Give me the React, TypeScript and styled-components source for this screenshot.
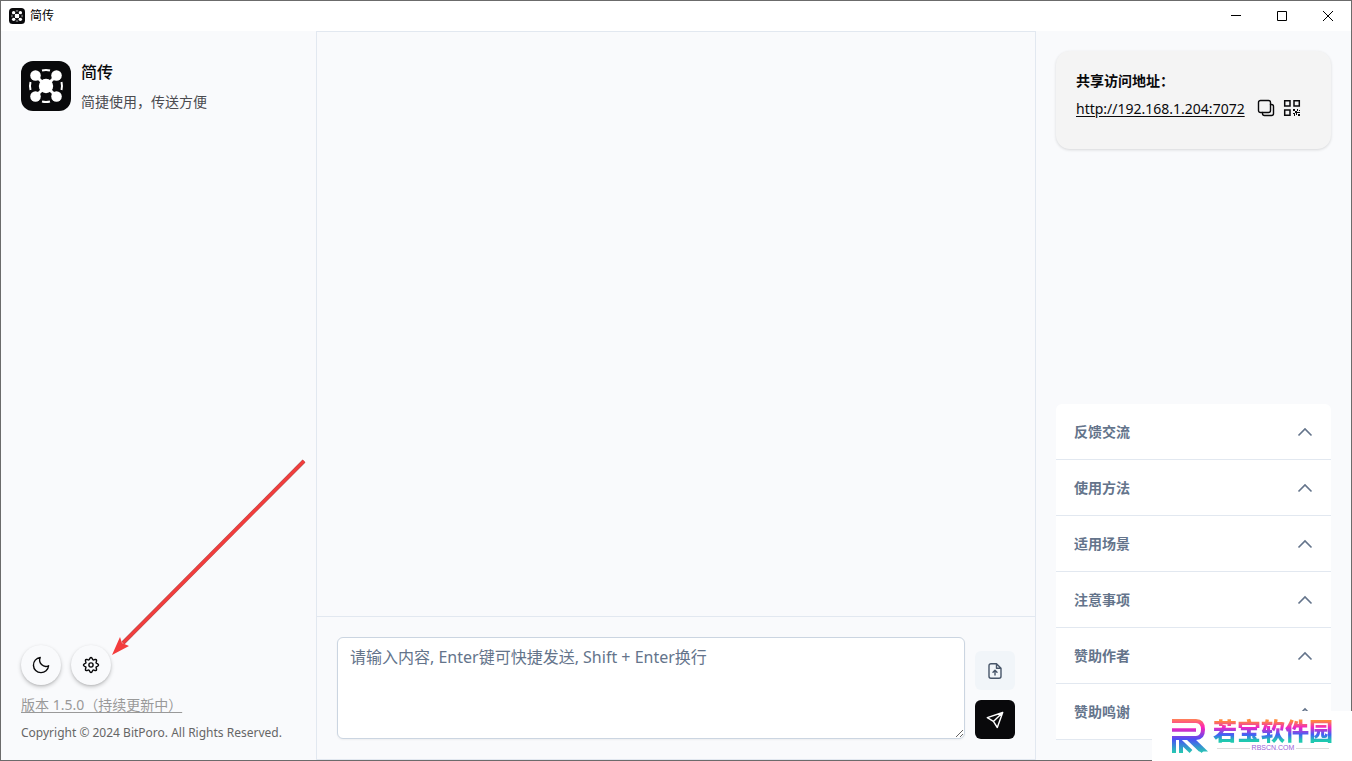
import React from 'react';
import styled, { createGlobalStyle, css } from 'styled-components';

const GlobalStyle = createGlobalStyle`
  *, *::before, *::after { box-sizing: border-box; }
  body {
    margin: 0;
    background: #f9fafc;
    color: #09090b;
    font-family: "Noto Sans", "Noto Sans CJK SC", sans-serif;
    font-size: 14px;
    line-height: 20px;
  }
  h1, h2, p { margin: 0; }
  button, textarea { font: inherit; color: inherit; }
  button { padding: 0; border: 0; background: none; cursor: pointer; }
  svg { display: block; flex: none; }
`;

const Window = styled.div`
  position: relative;
  display: flex;
  flex-direction: column;
  min-height: 100vh;
  border: 1px solid #6b6b6b;
`;

const TitleBar = styled.header`
  display: flex;
  align-items: center;
  gap: 5px;
  height: 30px;
  padding-left: 8px;
  background: #fff;
  color: #000;
  font-size: 12px;
`;

const WindowControls = styled.div`
  display: flex;
  align-self: stretch;
  margin-left: auto;
`;

const WindowButton = styled.button`
  display: grid;
  place-items: center;
  width: 46px;
`;

const Columns = styled.div`
  flex: 1;
  display: grid;
  grid-template-columns: minmax(0, 7fr) minmax(0, 16fr) minmax(0, 7fr);
`;

const Sidebar = styled.aside`
  display: flex;
  flex-direction: column;
  justify-content: space-between;
  padding: 30px 20px 15px;
`;

const Brand = styled.div`
  display: flex;
  gap: 10px;
`;

const BrandText = styled.div`
  display: flex;
  flex-direction: column;
  gap: 9px;
`;

const AppName = styled.h1`
  font-size: 16px;
  line-height: 22px;
  font-weight: 500;
`;

const Tagline = styled.p`
  color: #4b4b50;
`;

const RoundButtons = styled.div`
  display: flex;
  gap: 10px;
  margin-bottom: 8px;
`;

const RoundButton = styled.button`
  display: grid;
  place-items: center;
  width: 40px;
  height: 40px;
  border-radius: 50%;
  background: #f9fafc;
  box-shadow: 0 2px 4px rgba(0, 0, 0, 0.2), 0 1px 2px rgba(0, 0, 0, 0.1);
`;

const VersionLink = styled.a`
  display: table;
  color: #999;
  line-height: 24px;
  text-decoration: underline;
  text-underline-offset: 2px;
`;

const Copyright = styled.p`
  margin-top: 4px;
  color: #666;
  font-size: 12px;
  line-height: 24px;
`;

const Chat = styled.main`
  display: flex;
  flex-direction: column;
  border: 1px solid #e2e8f0;
`;

const Messages = styled.section`
  flex: 1;
`;

const Composer = styled.form`
  display: flex;
  align-items: flex-end;
  gap: 10px;
  padding: 20px;
  border-top: 1px solid #e2e8f0;
`;

const MessageInput = styled.textarea`
  flex: 1;
  height: 102px;
  padding: 7px 12px;
  border: 1px solid #cbd5e1;
  border-radius: 6px;
  background: #fff;
  box-shadow: 0 1px 2px rgba(0, 0, 0, 0.05);
  font-size: 16px;
  line-height: 24px;
  outline: none;
  &::placeholder { color: #64748b; opacity: 1; }
`;

const ComposerActions = styled.div`
  display: flex;
  flex-direction: column;
  gap: 10px;
`;

const SquareButton = styled.button<{ $primary?: boolean }>`
  display: grid;
  place-items: center;
  width: 40px;
  height: 39px;
  border-radius: 6px;
  ${({ $primary }) =>
    $primary
      ? css`background: #09090b; color: #fff;`
      : css`background: #f1f5f9; color: #475569;`}
`;

const InfoPanel = styled.aside`
  display: flex;
  flex-direction: column;
  justify-content: space-between;
  padding: 20px;
`;

const AddressCard = styled.section`
  min-height: 98px;
  padding: 20px;
  border-radius: 14px;
  background: #f4f4f4;
  box-shadow: 0 1px 3px rgba(0, 0, 0, 0.14);
`;

const AddressTitle = styled.h2`
  font-size: 14px;
  line-height: 20px;
  font-weight: 700;
`;

const AddressRow = styled.div`
  display: flex;
  align-items: flex-start;
  gap: 8px;
  margin-top: 4px;
`;

const AddressLink = styled.a`
  margin-right: 4px;
  color: inherit;
  line-height: 28px;
  text-underline-offset: 2px;
`;

const IconButton = styled.button`
  display: grid;
  place-items: center;
  width: 18px;
  height: 26px;
`;

const Accordion = styled.div`
  overflow: hidden;
  border-radius: 6px 6px 0 0;
  background: #fff;
`;

const AccordionButton = styled.button`
  display: flex;
  align-items: center;
  justify-content: space-between;
  width: 100%;
  height: 56px;
  padding: 0 18px;
  border-bottom: 1px solid #e2e8f0;
  color: #64748b;
  font-weight: 700;
`;

const Pointer = styled.svg`
  position: absolute;
  left: 110px;
  bottom: 101px;
  pointer-events: none;
`;

const Watermark = styled.div`
  position: absolute;
  right: -1px;
  bottom: -1px;
  display: flex;
  gap: 5px;
  width: 200px;
  height: 50px;
  padding: 6px 20px;
  background: #fff;
`;

const WatermarkText = styled.div`
  display: flex;
  flex-direction: column;
  align-items: center;
`;

const WatermarkName = styled.span`
  background: linear-gradient(#ff8a3c 15%, #f025c4 40%, #3f62f5 68%, #20c8b0 90%);
  background-clip: text;
  color: transparent;
  font-family: "Noto Sans CJK SC", sans-serif;
  font-size: 24px;
  line-height: 26px;
  font-weight: 900;
  white-space: nowrap;
`;

const WatermarkSite = styled.span`
  display: flex;
  align-items: center;
  gap: 2px;
  width: 112px;
  color: #9a62d8;
  font-family: "Liberation Sans", sans-serif;
  font-size: 7px;
  line-height: 10px;
  &::before, &::after { content: ""; flex: 1; height: 1px; background: #dcdcdc; }
`;

const LineIcon = styled.svg.attrs({
  width: 18,
  height: 18,
  viewBox: '0 0 18 18',
  'aria-hidden': true,
})`
  fill: none;
  stroke: currentColor;
  stroke-width: 1.4;
  stroke-linecap: round;
  stroke-linejoin: round;
`;

const Logo = ({ size }: { size: number }) => (
  <svg width={size} height={size} viewBox="0 0 50 50" aria-hidden="true">
    <rect width="50" height="50" rx="12" fill="#09090b" />
    <path d="M15 15L35 35M35 15L15 35" stroke="#fff" strokeWidth="3" />
    <g fill="#fff">
      <circle cx="14.500" cy="14.500" r="5.300" />
      <circle cx="35.500" cy="14.500" r="5.300" />
      <circle cx="14.500" cy="35.500" r="5.300" />
      <circle cx="35.500" cy="35.500" r="5.300" />
      <circle cx="25" cy="25" r="7.200" />
    </g>
    <path d="M21 9.500Q25 8.500 29 9.500M21 40.500Q25 41.500 29 40.500M9.500 21Q8.500 25 9.500 29M40.500 21Q41.500 25 40.500 29" fill="none" stroke="#fff" strokeWidth="2" />
  </svg>
);

const MoonIcon = () => (
  <LineIcon>
    <path d="M8.200 1.500A7.600 7.600 0 1 0 16.600 9.800A6.300 6.300 0 0 1 8.200 1.500Z" />
  </LineIcon>
);

// Outline of an eight-lobed wheel, sampled every three degrees.
const gearOutline =
  Array.from({ length: 120 }, (_, i) => {
    const angle = (i * Math.PI) / 60;
    const radius = 6.5 + Math.cos(angle * 8);
    return `${i ? 'L' : 'M'}${(9 + radius * Math.cos(angle)).toFixed(2)} ${(9 + radius * Math.sin(angle)).toFixed(2)}`;
  }).join('') + 'Z';

const GearIcon = () => (
  <LineIcon>
    <path d={gearOutline} />
    <circle cx="9" cy="9" r="2.100" />
  </LineIcon>
);

const FileUpIcon = () => (
  <LineIcon>
    <path d="M10.500 1.700H5A2 2 0 0 0 3 3.700V14.300a2 2 0 0 0 2 2H13a2 2 0 0 0 2-2V6.200L10.500 1.700V6.200H15M9 13V8.500M7 10.200L9 8.200L11 10.200" />
  </LineIcon>
);

const SendIcon = () => (
  <LineIcon>
    <path d="M16.700 1.500L1.300 6.600L7.400 10.400L11.300 16.500ZM7.400 10.400L16.700 1.500" />
  </LineIcon>
);

const CopyIcon = () => (
  <LineIcon>
    <rect x="1.500" y="1.500" width="12" height="12" rx="2" />
    <path d="M13.500 5.500H14.500a2 2 0 0 1 2 2V14.500a2 2 0 0 1-2 2H7.500a2 2 0 0 1-2-2V13.500" />
  </LineIcon>
);

const QrIcon = () => (
  <svg width="18" height="18" viewBox="0 0 18 18" aria-hidden="true">
    <path d="M1.700 1.700H7V7H1.700ZM11 1.700H16.300V7H11ZM1.700 11H7V16.300H1.700Z" fill="none" stroke="currentColor" strokeWidth="1.500" />
    <path d="M10 10h2v2h-2zM14 10h1v2h-1zM16 11h1v1h-1zM12 12h2v2h-2zM10 14h2v1h-2zM14 13h3v1h-3zM11 15h1v2h-1zM13 14h1v2h-1zM15 15h2v2h-2z" fill="currentColor" />
  </svg>
);

const Chevron = () => (
  <svg width="16" height="16" viewBox="0 0 16 16" fill="none" stroke="currentColor" strokeWidth="1.600" aria-hidden="true">
    <path d="M1.500 11.500L8 5L14.500 11.500" />
  </svg>
);

const WatermarkLogo = () => (
  <svg width="36" height="36" viewBox="0 0 36 36" fill="none" aria-hidden="true">
    <defs>
      <linearGradient id="brand" x1="0" y1="0" x2="0" y2="36" gradientUnits="userSpaceOnUse">
        <stop offset="0" stopColor="#ff9a3c" />
        <stop offset="0.280" stopColor="#ff20b8" />
        <stop offset="0.620" stopColor="#4b50f5" />
        <stop offset="1" stopColor="#25cdb0" />
      </linearGradient>
    </defs>
    <path d="M0 4H24Q31 4 31 12.500Q31 21 24 21H17" stroke="url(#brand)" strokeWidth="4" />
    <path d="M0 13H24" stroke="url(#brand)" strokeWidth="3.500" />
    <path d="M2 36V21H17L31 34.500M9 36V25L19 34.500" stroke="url(#brand)" strokeWidth="4" />
    <path d="M14 22L27 34.500H36L22 21Z" fill="url(#brand)" />
  </svg>
);

const topics = ['反馈交流', '使用方法', '适用场景', '注意事项', '赞助作者', '赞助鸣谢'];

export default function App() {
  return (
    <Window>
      <GlobalStyle />
      <TitleBar>
        <Logo size={16} />
        <span>简传</span>
        <WindowControls>
          <WindowButton aria-label="最小化">
            <svg width="10" height="10" stroke="#000"><path d="M0 4.500H10" /></svg>
          </WindowButton>
          <WindowButton aria-label="最大化">
            <svg width="10" height="10" stroke="#000" fill="none"><path d="M.5 .5H9.500V9.500H.5Z" /></svg>
          </WindowButton>
          <WindowButton aria-label="关闭">
            <svg width="10" height="10" stroke="#000"><path d="M0 0L10 10M10 0L0 10" /></svg>
          </WindowButton>
        </WindowControls>
      </TitleBar>
      <Columns>
        <Sidebar>
          <Brand>
            <Logo size={50} />
            <BrandText>
              <AppName>简传</AppName>
              <Tagline>简捷使用，传送方便</Tagline>
            </BrandText>
          </Brand>
          <div>
            <RoundButtons>
              <RoundButton aria-label="深色模式"><MoonIcon /></RoundButton>
              <RoundButton aria-label="设置"><GearIcon /></RoundButton>
            </RoundButtons>
            <VersionLink href="#version">版本 1.5.0（持续更新中）</VersionLink>
            <Copyright>Copyright © 2024 BitPoro. All Rights Reserved.</Copyright>
          </div>
        </Sidebar>
        <Chat>
          <Messages aria-label="消息" />
          <Composer onSubmit={(event) => event.preventDefault()}>
            <MessageInput aria-label="消息内容" placeholder="请输入内容, Enter键可快捷发送, Shift + Enter换行" />
            <ComposerActions>
              <SquareButton type="button" aria-label="上传文件"><FileUpIcon /></SquareButton>
              <SquareButton $primary type="submit" aria-label="发送"><SendIcon /></SquareButton>
            </ComposerActions>
          </Composer>
        </Chat>
        <InfoPanel>
          <AddressCard>
            <AddressTitle>共享访问地址：</AddressTitle>
            <AddressRow>
              <AddressLink href="http://192.168.1.204:7072">http://192.168.1.204:7072</AddressLink>
              <IconButton aria-label="复制地址"><CopyIcon /></IconButton>
              <IconButton aria-label="二维码"><QrIcon /></IconButton>
            </AddressRow>
          </AddressCard>
          <Accordion>
            {topics.map((topic) => (
              <AccordionButton key={topic} aria-expanded="false">
                {topic}
                <Chevron />
              </AccordionButton>
            ))}
          </Accordion>
        </InfoPanel>
      </Columns>
      <Pointer width="196" height="200" viewBox="0 0 196 200" aria-hidden="true">
        <path d="M193 2L12 184" stroke="#b0504f" strokeWidth="4" />
        <path d="M193 2L12 184" stroke="#f33c3c" strokeWidth="3" />
        <path d="M1 196L9 178L11 184L18 187Z" fill="#f33c3c" />
      </Pointer>
      <Watermark>
        <WatermarkLogo />
        <WatermarkText>
          <WatermarkName>若宝软件园</WatermarkName>
          <WatermarkSite>RBSCN.COM</WatermarkSite>
        </WatermarkText>
      </Watermark>
    </Window>
  );
}
